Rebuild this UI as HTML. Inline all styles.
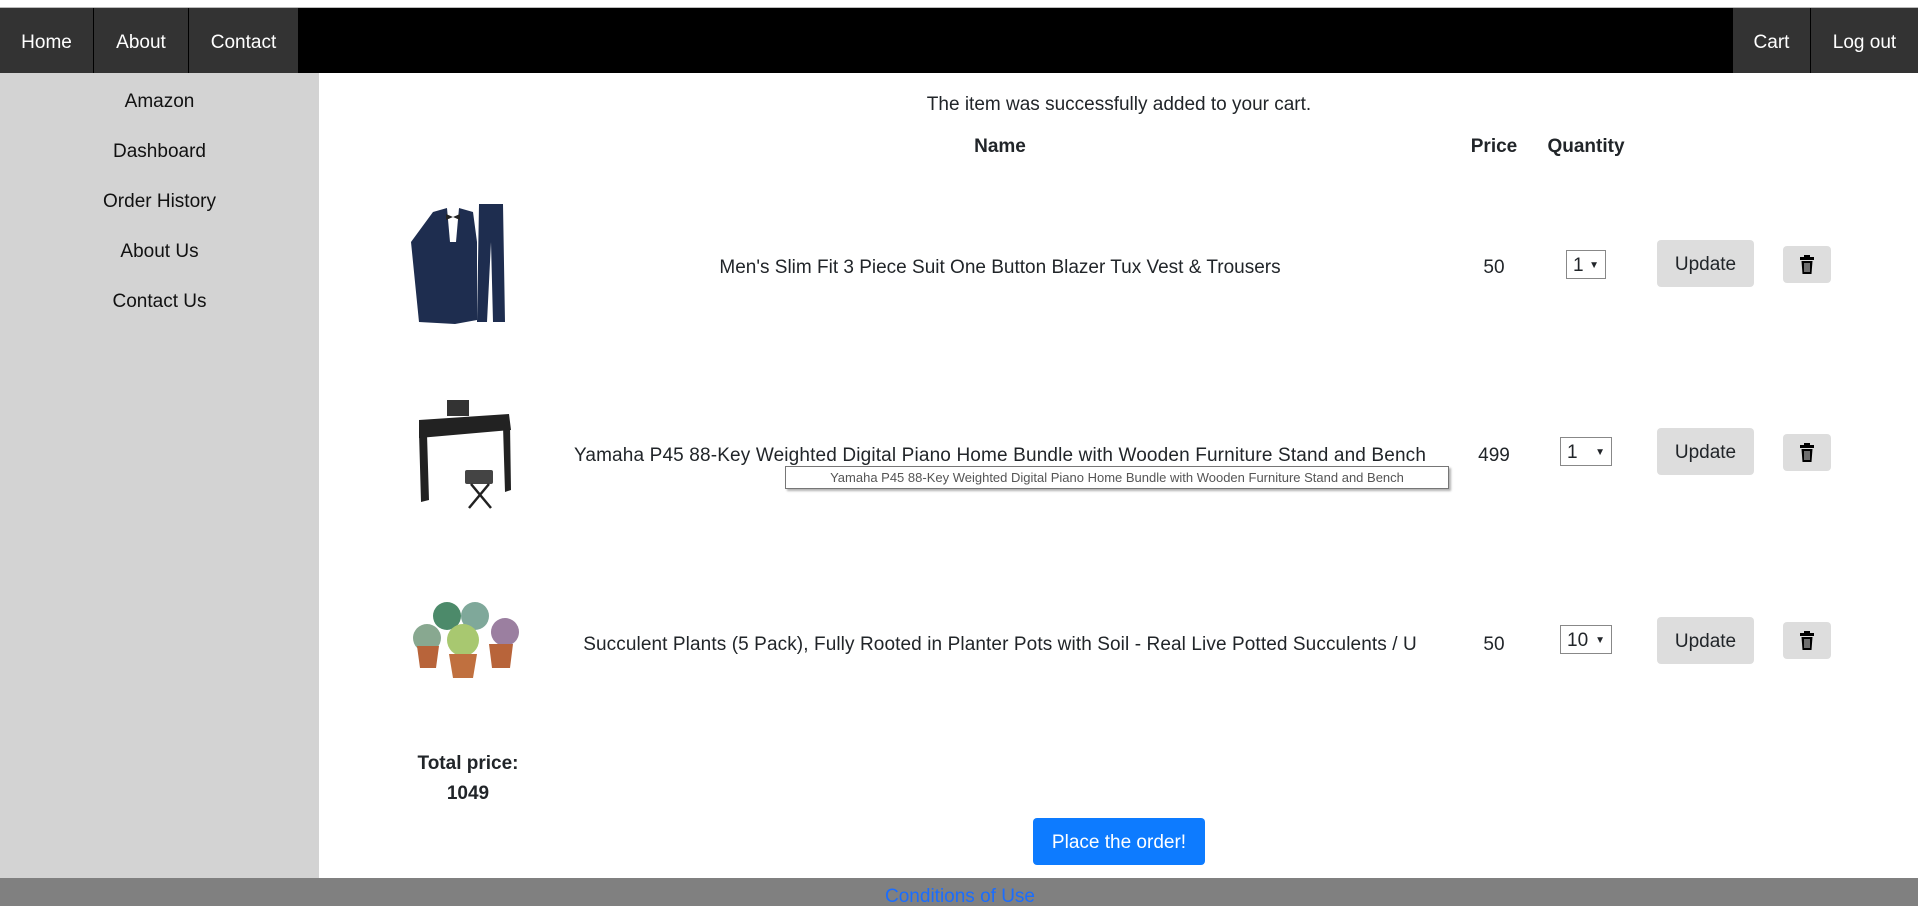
<!DOCTYPE html>
<html><head><meta charset="utf-8"><style>
*{margin:0;padding:0;box-sizing:border-box}
body{width:1918px;height:906px;overflow:hidden;background:#fff;font-family:"Liberation Sans",sans-serif;color:#212529;position:relative;font-size:19px}
.a{position:absolute}
.topline{top:0;left:0;width:1918px;height:8px;background:#fff;border-bottom:1px solid #bbb}
.nav{top:8px;left:0;width:1918px;height:65px;background:#000}
.tab{position:absolute;top:0;height:65px;background:#333;color:#fff;font-size:19px;line-height:69px;text-align:center}
.side{top:73px;left:0;width:319px;height:805px;background:#d3d3d3}
.side div{position:absolute;left:0;width:319px;text-align:center;font-size:19px;color:#111}
.c{text-align:center;transform:translateX(-50%)}
.b{font-weight:bold}
.sel{position:absolute;border:1px solid #888;background:#fff;height:29px;font-size:19px;line-height:29px;padding-left:6px}
.sel span{position:absolute;right:6px;top:0;font-size:10px}
.upd{position:absolute;width:97px;height:47px;background:#ddd;border-radius:4px;text-align:center;line-height:49px;font-size:19px}
.tr{position:absolute;width:48px;height:37px;background:#ddd;border-radius:4px}
.foot{top:878px;left:0;width:1918px;height:28px;background:#808080}
</style></head><body>
<div class="a topline"></div>
<div class="a nav">
<div class="tab" style="left:0;width:93px">Home</div>
<div class="tab" style="left:94px;width:94px">About</div>
<div class="tab" style="left:189px;width:109px">Contact</div>
<div class="tab" style="left:1733px;width:77px">Cart</div>
<div class="tab" style="left:1811px;width:107px">Log out</div>
</div>
<div class="a side">
<div style="top:18px">Amazon</div>
<div style="top:68px">Dashboard</div>
<div style="top:118px">Order History</div>
<div style="top:168px">About Us</div>
<div style="top:218px">Contact Us</div>
</div>

<div class="a c" style="left:1119px;top:94px;white-space:nowrap">The item was successfully added to your cart.</div>
<div class="a c b" style="left:1000px;top:136px">Name</div>
<div class="a c b" style="left:1494px;top:136px">Price</div>
<div class="a c b" style="left:1586px;top:136px">Quantity</div>

<!-- row 1 -->
<svg class="a" style="left:407px;top:202px" width="116" height="124" viewBox="0 0 116 124">
<path d="M26 10 L40 6 L46 22 L52 6 L66 10 L70 40 L70 118 L48 122 L12 120 L4 40 Z" fill="#1e2d4f"/>
<path d="M40 6 L52 6 L49 40 L43 40 Z" fill="#fff"/><path d="M39 12 l7 3 7-3 v6 l-7 -3 -7 3z" fill="#222"/>
<path d="M72 2 L96 2 L98 120 L86 120 L84 40 L80 120 L70 120 Z" fill="#1e2d4f"/>
</svg>
<div class="a c" style="left:1000px;top:257px;white-space:nowrap">Men's Slim Fit 3 Piece Suit One Button Blazer Tux Vest &amp; Trousers</div>
<div class="a c" style="left:1494px;top:257px">50</div>
<div class="sel" style="left:1566px;top:250px;width:40px">1<span>▼</span></div>
<div class="upd" style="left:1657px;top:240px">Update</div>
<div class="tr" style="left:1783px;top:246px"><svg width="48" height="37" viewBox="0 0 48 37"><path d="M17 11h14v3H17zM21 9h6v2h-6zM18.5 15h11l-1 13h-9z" fill="#000"/><path d="M22 17v9M24 17v9M26 17v9" stroke="#ddd" stroke-width="1"/></svg></div>

<!-- row 2 -->
<svg class="a" style="left:413px;top:398px" width="112" height="112" viewBox="0 0 112 112">
<rect x="34" y="2" width="22" height="16" fill="#333"/><path d="M6 22 L96 16 L98 32 L6 40Z" fill="#222"/>
<path d="M6 34 L8 104 L16 102 L14 36Z M90 28 L92 94 L98 92 L97 26Z" fill="#222"/>
<rect x="52" y="72" width="28" height="14" rx="2" fill="#444"/><path d="M58 86 L78 110 M76 86 L56 110" stroke="#222" stroke-width="2.5"/>
</svg>
<div class="a c" style="left:1000px;top:445px;white-space:nowrap;letter-spacing:0.15px">Yamaha P45 88-Key Weighted Digital Piano Home Bundle with Wooden Furniture Stand and Bench</div>
<div class="a c" style="left:1494px;top:445px">499</div>
<div class="sel" style="left:1560px;top:437px;width:52px">1<span>▼</span></div>
<div class="upd" style="left:1657px;top:428px">Update</div>
<div class="tr" style="left:1783px;top:434px"><svg width="48" height="37" viewBox="0 0 48 37"><path d="M17 11h14v3H17zM21 9h6v2h-6zM18.5 15h11l-1 13h-9z" fill="#000"/><path d="M22 17v9M24 17v9M26 17v9" stroke="#ddd" stroke-width="1"/></svg></div>
<div class="a" style="left:785px;top:466px;width:664px;height:23px;background:#fff;border:1px solid #767676;box-shadow:2px 2px 2px rgba(0,0,0,.3);font-size:13px;line-height:21px;text-align:center;color:#555;white-space:nowrap">Yamaha P45 88-Key Weighted Digital Piano Home Bundle with Wooden Furniture Stand and Bench</div>

<!-- row 3 -->
<svg class="a" style="left:405px;top:600px" width="122" height="80" viewBox="0 0 122 80">
<circle cx="42" cy="16" r="14" fill="#4c8a6a"/><circle cx="70" cy="16" r="14" fill="#7fa89a"/>
<circle cx="22" cy="38" r="14" fill="#88a890"/><circle cx="100" cy="32" r="14" fill="#9b7fa0"/>
<path d="M12 46h22l-3 22H15z M84 44h24l-3 24H87z" fill="#b8643a"/>
<circle cx="58" cy="40" r="16" fill="#a8c870"/><path d="M44 54h28l-4 24H48z" fill="#c0703f"/>
</svg>
<div class="a c" style="left:1000px;top:634px;white-space:nowrap;letter-spacing:0.1px">Succulent Plants (5 Pack), Fully Rooted in Planter Pots with Soil - Real Live Potted Succulents / U</div>
<div class="a c" style="left:1494px;top:634px">50</div>
<div class="sel" style="left:1560px;top:625px;width:52px">10<span>▼</span></div>
<div class="upd" style="left:1657px;top:617px">Update</div>
<div class="tr" style="left:1783px;top:622px"><svg width="48" height="37" viewBox="0 0 48 37"><path d="M17 11h14v3H17zM21 9h6v2h-6zM18.5 15h11l-1 13h-9z" fill="#000"/><path d="M22 17v9M24 17v9M26 17v9" stroke="#ddd" stroke-width="1"/></svg></div>

<div class="a c b" style="left:468px;top:753px;white-space:nowrap">Total price:</div>
<div class="a c b" style="left:468px;top:783px">1049</div>
<div class="a" style="left:1033px;top:818px;width:172px;height:47px;background:#0d7bff;border-radius:4px;color:#fff;text-align:center;line-height:49px">Place the order!</div>

<div class="a foot"></div>
<div class="a c" style="left:960px;top:886px;color:#1a6dff;white-space:nowrap">Conditions of Use</div>
</body></html>
